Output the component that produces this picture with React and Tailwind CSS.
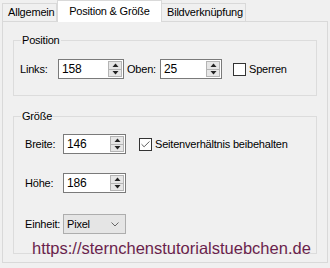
import { Check } from 'lucide-react';

function Spinner() {
    return (
        <div className="flex flex-col w-[15px] h-full py-[1px] pr-[1px]">
            <div className="flex-1 flex items-center justify-center bg-[#e6e6e6] border border-[#b4b4b4]">
                <svg width="7" height="4" viewBox="0 0 7 4"><path d="M0.5 4 L3.5 0.5 L6.5 4 Z" fill="#222" /></svg>
            </div>
            <div className="flex-1 flex items-center justify-center bg-[#e6e6e6] border border-[#b4b4b4] border-t-0">
                <svg width="7" height="4" viewBox="0 0 7 4"><path d="M0.5 0 L3.5 3.5 L6.5 0 Z" fill="#222" /></svg>
            </div>
        </div>
    );
}

function NumBox({ value, w }) {
    return (
        <div className={`flex h-[20px] bg-white border border-[#7a7a7a] ${w}`}>
            <div className="flex-1 flex items-center pl-[3px] text-[12px]">{value}</div>
            <Spinner />
        </div>
    );
}

function CheckBox({ checked, label }) {
    return (
        <div className="flex items-center gap-[3px]">
            <div className="w-[13px] h-[13px] border border-[#333] bg-white flex items-center justify-center">
                {checked && <Check size={11} strokeWidth={1.6} color="#222" />}
            </div>
            <span>{label}</span>
        </div>
    );
}

export default function App() {
    return (
        <div className="w-[330px] h-[268px] bg-[#f0f0f0] relative overflow-hidden text-[11px] leading-[13px] text-black tracking-[-0.2px]"
            style={{ fontFamily: '"Liberation Sans", Arial, sans-serif' }}>
            <div className="flex items-end h-[21px] pl-[2px]">
                <div className="w-[55px] h-[18px] border border-[#d9d9d9] border-b-0 flex items-center pl-[5px]">Allgemein</div>
                <div className="w-[105px] h-[22px] bg-white border border-[#d9d9d9] border-b-0 -mb-px relative z-10 flex items-start pt-[4px] justify-center">Position &amp; Größe</div>
                <div className="w-[84px] h-[18px] border border-[#d9d9d9] border-b-0 border-l-0 flex items-center pl-[5px]">Bildverknüpfung</div>
            </div>
            <div className="ml-[2px] w-[326px] h-[242px] border border-[#d9d9d9] pt-[18px] pl-[10px]">
                <div className="relative w-[304px] h-[56px] border border-[#dcdcdc] pt-[18px] pl-[6px]">
                    <span className="absolute left-[7px] -top-[7px] bg-[#f0f0f0] px-[1px]">Position</span>
                    <div className="flex items-center">
                        <span className="w-[38px]">Links:</span>
                        <NumBox value="158" w="w-[66px]" />
                        <span className="w-[33px] ml-[3px]">Oben:</span>
                        <NumBox value="25" w="w-[62px]" />
                        <div className="ml-[11px]"><CheckBox label="Sperren" /></div>
                    </div>
                </div>
                <div className="relative w-[304px] h-[138px] border border-[#dcdcdc] mt-[20px] pt-[17px] pl-[11px]">
                    <span className="absolute left-[7px] -top-[7px] bg-[#f0f0f0] px-[1px]">Größe</span>
                    <div className="flex items-center">
                        <span className="w-[38px]">Breite:</span>
                        <NumBox value="146" w="w-[63px]" />
                        <div className="ml-[13px]"><CheckBox checked label="Seitenverhältnis beibehalten" /></div>
                    </div>
                    <div className="flex items-center mt-[19px]">
                        <span className="w-[38px]">Höhe:</span>
                        <NumBox value="186" w="w-[63px]" />
                    </div>
                    <div className="flex items-center mt-[21px]">
                        <span className="w-[38px]">Einheit:</span>
                        <div className="w-[63px] h-[20px] bg-[#e5e5e5] border border-[#adadad] flex items-center justify-between pl-[3px] pr-[6px]">
                            <span>Pixel</span>
                            <svg width="8" height="5" viewBox="0 0 8 5"><path d="M0.5 0.5 L4 4 L7.5 0.5" fill="none" stroke="#666" strokeWidth="1" /></svg>
                        </div>
                    </div>
                </div>
            </div>
            <span className="absolute left-[32px] top-[240px] text-[16.5px] leading-none tracking-normal text-[#6a1f4c]">https://sternchenstutorialstuebchen.de</span>
        </div>
    );
}
